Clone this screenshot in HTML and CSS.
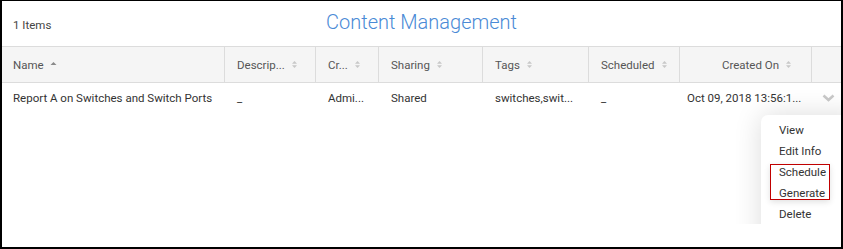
FILE: index.html
```html
<!DOCTYPE html>
<html>

<head>
    <meta charset="utf-8">
    <title>Content Management</title>
    <link rel="stylesheet" href="styles.css">
</head>

<body>
    <div id="frame">
        <div id="toolbar">
            <span id="item-count">1 Items</span>
            <h1 id="page-title">Content Management</h1>
        </div>
        <div id="table-area">
            <div class="grid head">
                <div class="cell">Name <svg class="sort" width="7" height="9" viewBox="0 0 7 9"><path d="M0.5 5 L3.5 2 L6.5 5 Z" fill="#8a8a8a"/></svg></div>
                <div class="cell">Descrip... <svg class="sort" width="7" height="9" viewBox="0 0 7 9"><path d="M1 3.8 L3.5 1 L6 3.8 Z M1 5.2 L3.5 8 L6 5.2 Z" fill="#c8c8c8"/></svg></div>
                <div class="cell">Cr... <svg class="sort" width="7" height="9" viewBox="0 0 7 9"><path d="M1 3.8 L3.5 1 L6 3.8 Z M1 5.2 L3.5 8 L6 5.2 Z" fill="#c8c8c8"/></svg></div>
                <div class="cell">Sharing <svg class="sort" width="7" height="9" viewBox="0 0 7 9"><path d="M1 3.8 L3.5 1 L6 3.8 Z M1 5.2 L3.5 8 L6 5.2 Z" fill="#c8c8c8"/></svg></div>
                <div class="cell">Tags <svg class="sort" width="7" height="9" viewBox="0 0 7 9"><path d="M1 3.8 L3.5 1 L6 3.8 Z M1 5.2 L3.5 8 L6 5.2 Z" fill="#c8c8c8"/></svg></div>
                <div class="cell">Scheduled <svg class="sort" width="7" height="9" viewBox="0 0 7 9"><path d="M1 3.8 L3.5 1 L6 3.8 Z M1 5.2 L3.5 8 L6 5.2 Z" fill="#c8c8c8"/></svg></div>
                <div class="cell right">Created On <svg class="sort" width="7" height="9" viewBox="0 0 7 9"><path d="M1 3.8 L3.5 1 L6 3.8 Z M1 5.2 L3.5 8 L6 5.2 Z" fill="#c8c8c8"/></svg></div>
                <div class="cell last"></div>
            </div>
            <div class="grid row">
                <div class="cell">Report A on Switches and Switch Ports</div>
                <div class="cell">_</div>
                <div class="cell">Admi...</div>
                <div class="cell">Shared</div>
                <div class="cell">switches,swit...</div>
                <div class="cell">_</div>
                <div class="cell date">Oct 09, 2018 13:56:1...</div>
                <div class="cell last">
                    <svg width="13" height="8" viewBox="0 0 13 8"><path d="M1.5 1.5 L6.5 6 L11.5 1.5" fill="none" stroke="#c9c9c9" stroke-width="2.6"/></svg>
                </div>
            </div>

            <div id="action-menu">
                <div class="menu-item">View</div>
                <div class="menu-item">Edit Info</div>
                <div class="menu-item">Schedule</div>
                <div class="menu-item">Generate</div>
                <div class="menu-item">Delete</div>
                <div id="highlight"></div>
            </div>
        </div>
    </div>
</body>

</html>
```

FILE: styles.css
```css
body {
    margin: 0;
    font-family: Roboto, 'Liberation Sans', sans-serif;
    font-size: 11.5px;
    color: #333;
}

#frame {
    width: 839px;
    height: 246px;
    border-left: 2px solid #000;
    border-top: 1px solid #000;
    border-right: 2px solid #000;
    border-bottom: 2px solid #000;
    background: white;
    overflow: hidden;
}

#toolbar {
    height: 45px;
    display: flex;
    align-items: center;
    justify-content: center;
    position: relative;
}

#item-count {
    position: absolute;
    left: 11px;
    top: 17px;
    color: #444;
}

#page-title {
    margin: 0;
    font-size: 20px;
    font-weight: 300;
    color: #4a8ad6;
    padding-bottom: 3px;
}

#table-area {
    position: relative;
    height: 178px;
    overflow: hidden;
}

.grid {
    display: grid;
    grid-template-columns: 223px 91px 63px 104px 106px 91px 132px 1fr;
}

.head {
    background-color: #f5f5f5;
    border-top: 1px solid #dcdcdc;
    border-bottom: 1px solid #dcdcdc;
    height: 35px;
    color: #555;
}

.head>.cell {
    border-right: 1px solid #dcdcdc;
}

.head>.cell.last {
    border-right: none;
}

.cell {
    display: flex;
    align-items: center;
    padding-left: 12px;
    white-space: nowrap;
    overflow: hidden;
}

.grid>.cell:first-child {
    padding-left: 11px;
}

.cell.right {
    justify-content: flex-end;
    padding-right: 19px;
}

.sort {
    margin-left: 6px;
}

.row {
    height: 29px;
}

.row>.cell.date {
    padding-left: 7px;
}

.row>.cell.last {
    padding-left: 10px;
    padding-top: 1px;
}

#action-menu {
    position: absolute;
    left: 759px;
    top: 69px;
    width: 100px;
    height: 130px;
    background: white;
    border-radius: 7px 0 0 0;
    box-shadow: 0 0 28px rgba(0, 0, 0, 0.14);
    padding-top: 5px;
}

.menu-item {
    height: 21px;
    line-height: 21px;
    padding-left: 18px;
    color: #333;
}

#highlight {
    position: absolute;
    left: 9px;
    top: 49px;
    width: 58px;
    height: 34px;
    border: 1px solid #c00000;
    box-shadow: 0 2px 6px rgba(0, 0, 0, 0.12);
}
```
